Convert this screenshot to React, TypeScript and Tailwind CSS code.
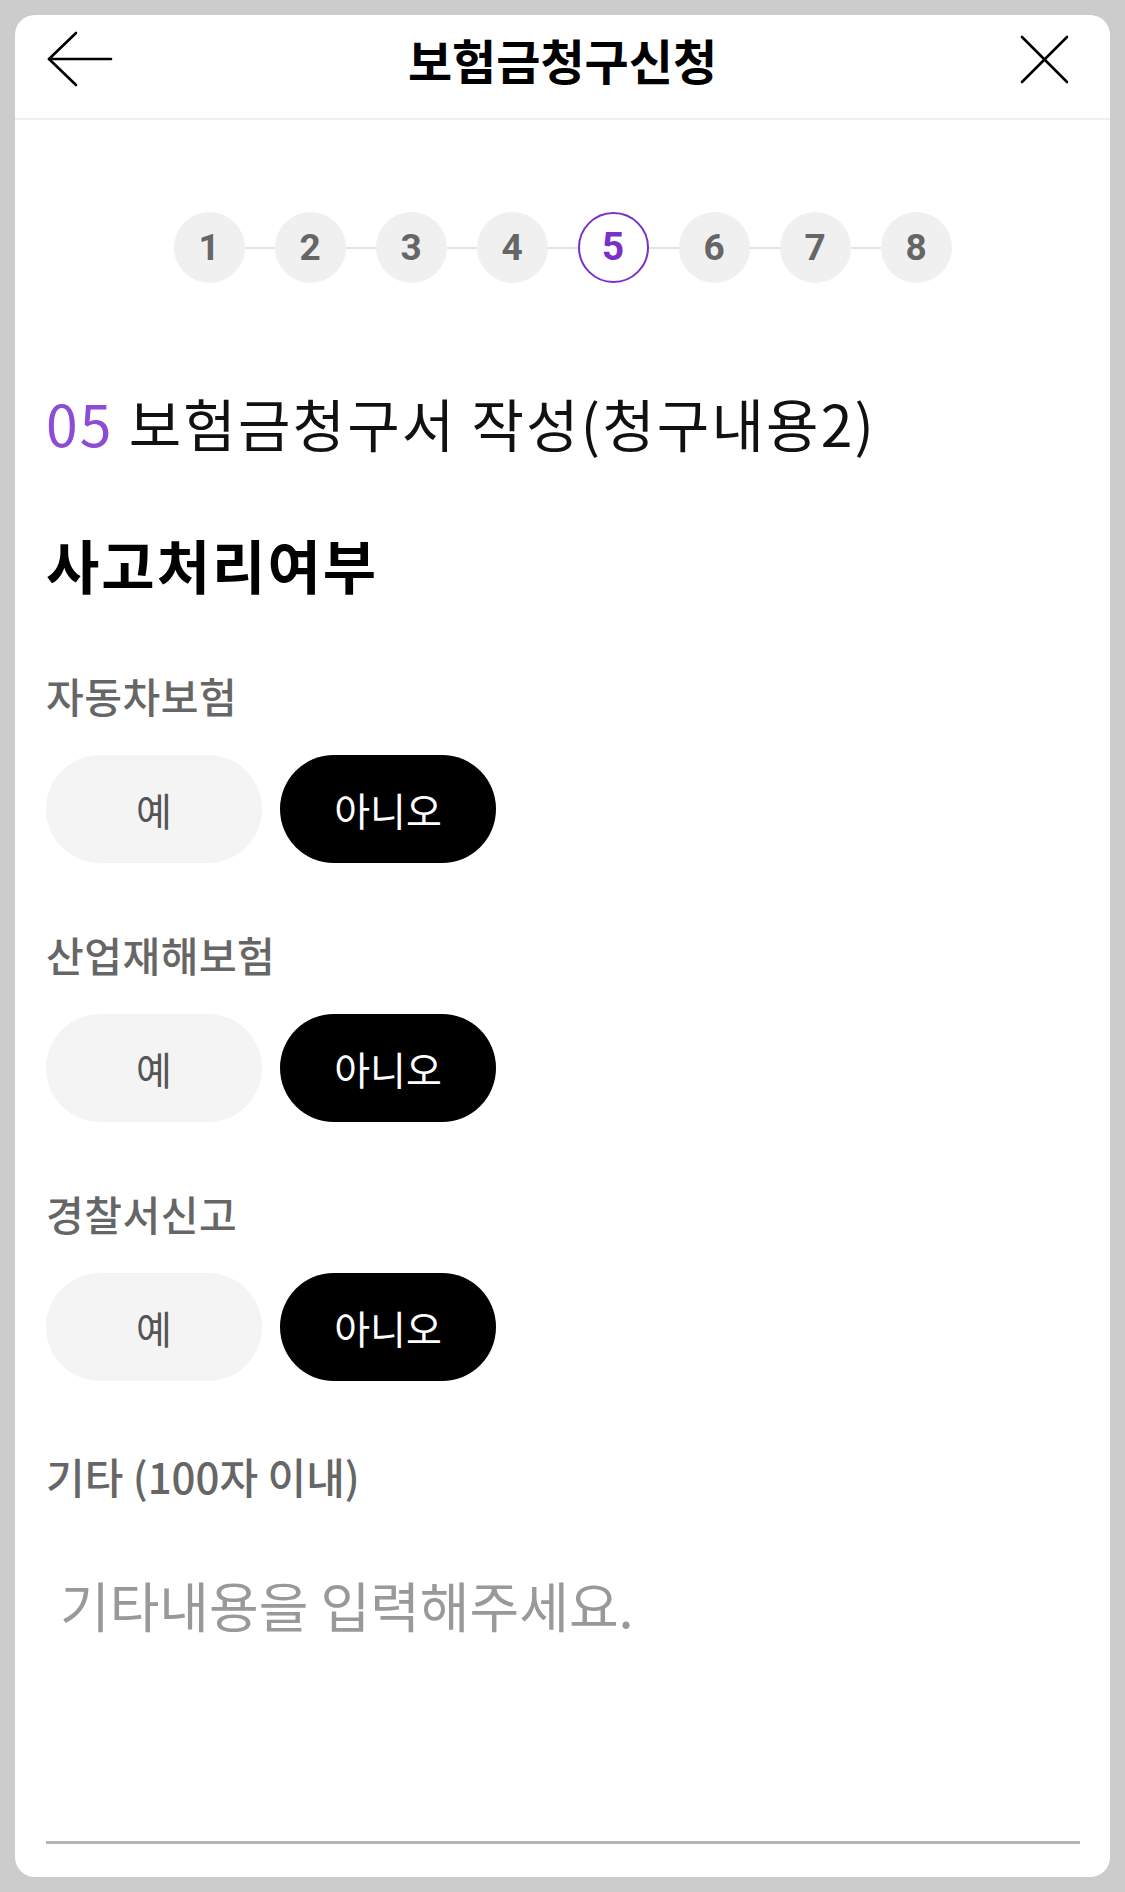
import React from "react";

const KR = { fontFamily: '"Noto Sans CJK KR", "Noto Sans", sans-serif' };

function Steps() {
  const steps = [1, 2, 3, 4, 5, 6, 7, 8];
  return (
    <div className="mt-[92px] flex items-center justify-center">
      {steps.map((n, i) => (
        <React.Fragment key={n}>
          {i > 0 && <div className="h-[2px] w-[30px] bg-[#e4e4e4]" />}
          {n === 5 ? (
            <div
              className="flex h-[71px] w-[71px] items-center justify-center rounded-full border-2 border-[#7b2fc9] bg-white text-[39px] font-bold text-[#7b2fc9]"
              style={{ fontFamily: 'Roboto, "Liberation Sans", sans-serif' }}
            >
              {n}
            </div>
          ) : (
            <div
              className="flex h-[71px] w-[71px] items-center justify-center rounded-full bg-[#f0f0f0] text-[37px] font-bold text-[#666666]"
              style={{ fontFamily: 'Roboto, "Liberation Sans", sans-serif' }}
            >
              {n}
            </div>
          )}
        </React.Fragment>
      ))}
    </div>
  );
}

function YesNo({ label, first }: { label: string; first?: boolean }) {
  return (
    <div className={first ? "mt-[75px]" : "mt-[68px]"}>
      <div className="text-[41px] font-medium leading-[47px] tracking-[0.5px] text-[#666666]">{label}</div>
      <div className="mt-[36px] flex gap-[18px]">
        <button className="flex h-[108px] w-[216px] items-center justify-center rounded-full bg-[#f4f4f4] text-[39px] text-[#555555]">
          예
        </button>
        <button className="flex h-[108px] w-[216px] items-center justify-center rounded-full bg-black text-[39px] text-white">
          아니오
        </button>
      </div>
    </div>
  );
}

export default function App() {
  return (
    <div className="min-h-[1892px] bg-[#cccccc] p-[15px]" style={KR}>
      <div className="flex h-[1862px] flex-col overflow-hidden rounded-[20px] bg-white">
        <header className="grid h-[105px] shrink-0 grid-cols-[1fr_auto_1fr] items-start border-b-2 border-[#efefef]">
          <div className="flex h-[88px] items-center pl-[31px]">
            <svg width="68" height="56" viewBox="0 0 68 56" fill="none" stroke="black" strokeWidth="2.6" strokeLinecap="round" strokeLinejoin="round">
              <path d="M3 28H65" />
              <path d="M30 2L3 28L30 54" />
            </svg>
          </div>
          <h1 className="flex h-[88px] items-center text-[48px] font-bold text-black">보험금청구신청</h1>
          <div className="flex h-[88px] items-center justify-end pr-[41px]">
            <svg width="49" height="49" viewBox="0 0 49 49" fill="none" stroke="black" strokeWidth="2.6" strokeLinecap="round">
              <path d="M2 2L47 47" />
              <path d="M47 2L2 47" />
            </svg>
          </div>
        </header>

        <Steps />

        <div className="flex flex-1 flex-col pl-[31px] pr-[30px]">
          <h2 className="mt-[106px] text-[57px] font-normal leading-[67px] tracking-[2.2px] text-[#111111]">
            <span className="text-[#8d4bd6]">05</span> 보험금청구서 작성(청구내용2)
          </h2>

          <h3 className="mt-[75px] text-[58px] font-bold leading-[66px] tracking-[2px] text-black">사고처리여부</h3>

          <YesNo label="자동차보험" first />
          <YesNo label="산업재해보험" />
          <YesNo label="경찰서신고" />

          <div className="mt-[71px] text-[42px] font-medium leading-[47px] text-[#666666]">기타 (100자 이내)</div>

          <textarea
            className="mt-[55px] h-[290px] w-full resize-none border-b-[3px] border-[#b5b5b5] pl-[14px] pt-[16px] text-[54px] leading-[70px] text-[#333333] outline-none placeholder:text-[#999999]"
            placeholder="기타내용을 입력해주세요."
          />
        </div>
      </div>
    </div>
  );
}
